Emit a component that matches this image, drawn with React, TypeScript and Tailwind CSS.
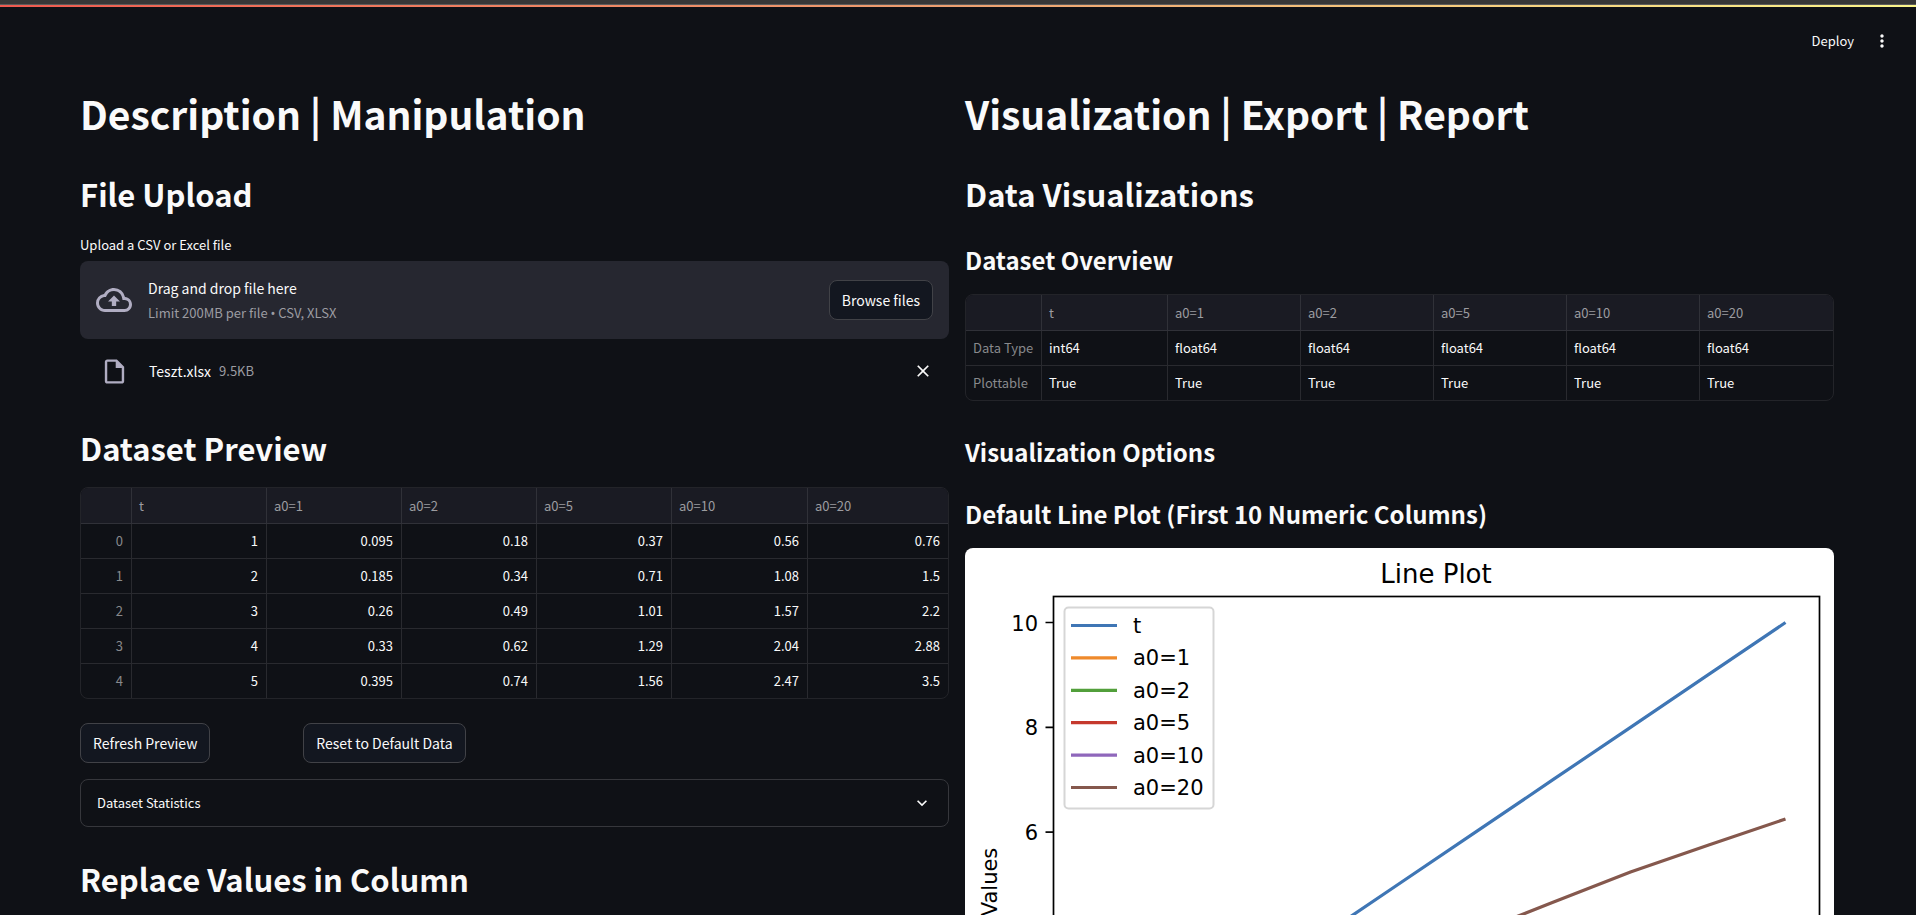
import type { ReactNode } from "react";

type Column = { label: string; width: string };

const previewColumns: Column[] = [
  { label: "", width: "w-[51px]" },
  { label: "t", width: "w-[135px]" },
  { label: "a0=1", width: "w-[135px]" },
  { label: "a0=2", width: "w-[135px]" },
  { label: "a0=5", width: "w-[135px]" },
  { label: "a0=10", width: "w-[136px]" },
  { label: "a0=20", width: "" },
];

const previewRows = [
  ["0", "1", "0.095", "0.18", "0.37", "0.56", "0.76"],
  ["1", "2", "0.185", "0.34", "0.71", "1.08", "1.5"],
  ["2", "3", "0.26", "0.49", "1.01", "1.57", "2.2"],
  ["3", "4", "0.33", "0.62", "1.29", "2.04", "2.88"],
  ["4", "5", "0.395", "0.74", "1.56", "2.47", "3.5"],
];

const overviewColumns: Column[] = [
  { label: "", width: "w-[76px]" },
  { label: "t", width: "w-[126px]" },
  { label: "a0=1", width: "w-[133px]" },
  { label: "a0=2", width: "w-[133px]" },
  { label: "a0=5", width: "w-[133px]" },
  { label: "a0=10", width: "w-[133px]" },
  { label: "a0=20", width: "" },
];

const overviewRows = [
  ["Data Type", "int64", "float64", "float64", "float64", "float64", "float64"],
  ["Plottable", "True", "True", "True", "True", "True", "True"],
];

const series = [
  { name: "t", color: "#3f76b5", values: [1, 2, 3, 4, 5, 6, 7, 8, 9, 10] },
  { name: "a0=1", color: "#ef8a2b", values: [0.095, 0.185, 0.26, 0.33, 0.395, 0.45, 0.5, 0.55, 0.59, 0.63] },
  { name: "a0=2", color: "#529f3b", values: [0.18, 0.34, 0.49, 0.62, 0.74, 0.85, 0.95, 1.04, 1.12, 1.2] },
  { name: "a0=5", color: "#c5392d", values: [0.37, 0.71, 1.01, 1.29, 1.56, 1.8, 2.02, 2.23, 2.42, 2.6] },
  { name: "a0=10", color: "#8f67bb", values: [0.56, 1.08, 1.57, 2.04, 2.47, 2.88, 3.26, 3.62, 3.96, 4.28] },
  { name: "a0=20", color: "#85584d", values: [0.76, 1.5, 2.2, 2.88, 3.5, 4.08, 4.66, 5.24, 5.75, 6.25] },
];

function Title({ children }: { children: ReactNode }) {
  return <h1 className="text-[39px] leading-[52px] font-bold">{children}</h1>;
}

function Heading({ children }: { children: ReactNode }) {
  return <h2 className="text-[31px] leading-[44px] font-semibold">{children}</h2>;
}

function Subheading({ children }: { children: ReactNode }) {
  return <h3 className="text-[24px] leading-9 font-semibold">{children}</h3>;
}

function ActionButton({ children }: { children: ReactNode }) {
  return (
    <button
      type="button"
      className="h-10 shrink-0 rounded-lg border border-[#414247] bg-[#131720] px-3 text-[14px] whitespace-nowrap"
    >
      {children}
    </button>
  );
}

function DataTable({ columns, rows, numeric }: { columns: Column[]; rows: string[][]; numeric?: boolean }) {
  return (
    <div className="overflow-hidden rounded-lg border border-[#232429]">
      <table className="w-full table-fixed border-separate border-spacing-0 text-[13px] leading-5">
        <thead>
          <tr className="h-9 bg-[#1a1b23]">
            {columns.map((column, i) => (
              <th
                key={i}
                scope="col"
                className={`${column.width} border-r border-b border-[#303138] p-0 pl-[7px] text-left font-normal text-[#9c9ca0] last:border-r-0`}
              >
                {column.label}
              </th>
            ))}
          </tr>
        </thead>
        <tbody>
          {rows.map((row) => (
            <tr key={row[0]} className="group h-[35px] last:h-[34px]">
              {row.map((cell, i) =>
                i === 0 ? (
                  <th
                    key={i}
                    scope="row"
                    className={`${numeric ? "text-right" : "text-left"} border-r border-b border-[#292a2f] p-0 pr-2 pl-[7px] font-normal whitespace-nowrap text-[#88898c] group-last:border-b-0`}
                  >
                    {cell}
                  </th>
                ) : (
                  <td
                    key={i}
                    className={`${numeric ? "text-right" : "text-left"} border-r border-b border-[#292a2f] p-0 pr-2 pl-[7px] group-last:border-b-0 last:border-r-0`}
                  >
                    {cell}
                  </td>
                ),
              )}
            </tr>
          ))}
        </tbody>
      </table>
    </div>
  );
}

const AXES = { left: 88, top: 48, right: 855, bottom: 619 };
const xAt = (index: number) => 123 + index * 77.5;
const yAt = (value: number) => 74.5 + (10 - value) * 52.4;

function LinePlot() {
  return (
    <svg
      viewBox="0 0 869 690"
      role="img"
      aria-label="Line Plot"
      className="block w-full rounded-lg bg-white font-['DejaVu_Sans',sans-serif]"
    >
      <text x="471" y="35" fontSize="26" textAnchor="middle">
        Line Plot
      </text>
      {series.map((line) => (
        <polyline
          key={line.name}
          points={line.values.map((v, i) => `${xAt(i)},${yAt(v)}`).join(" ")}
          fill="none"
          stroke={line.color}
          strokeWidth="3.2"
          strokeLinejoin="round"
        />
      ))}
      <rect
        x={AXES.left + 0.5}
        y={AXES.top + 0.5}
        width={AXES.right - AXES.left - 1}
        height={AXES.bottom - AXES.top}
        fill="none"
        stroke="#000"
        strokeWidth="1.7"
      />
      {[0, 2, 4, 6, 8, 10].map((tick) => (
        <g key={tick}>
          <path d={`M${AXES.left - 7.5} ${yAt(tick)}H${AXES.left}`} stroke="#000" strokeWidth="1.7" />
          <text x="73" y={yAt(tick) + 8} fontSize="21" textAnchor="end">
            {tick}
          </text>
        </g>
      ))}
      {[0, 2, 4, 6, 8].map((tick) => (
        <g key={tick}>
          <path d={`M${xAt(tick)} ${AXES.bottom}v7.5`} stroke="#000" strokeWidth="1.7" />
          <text x={xAt(tick)} y="649" fontSize="21" textAnchor="middle">
            {tick}
          </text>
        </g>
      ))}
      <text transform="translate(32 334) rotate(-90)" fontSize="21" textAnchor="middle">
        Values
      </text>
      <text x="471" y="677" fontSize="21" textAnchor="middle">
        Index
      </text>
      <rect x="99.5" y="59.5" width="149" height="201" rx="4" fill="#fff" stroke="#d6d6d6" strokeWidth="2" />
      {series.map((line, i) => (
        <g key={line.name}>
          <path d={`M106 ${77.5 + i * 32.4}h46`} stroke={line.color} strokeWidth="3.2" />
          <text x="168" y={85 + i * 32.4} fontSize="21">
            {line.name}
          </text>
        </g>
      ))}
    </svg>
  );
}

export default function App() {
  return (
    <div className="h-screen overflow-y-auto bg-[#0f1116] font-['Noto_Sans_CJK_SC','Noto_Sans',sans-serif] text-[#fafafa] [scrollbar-width:none]">
      <div className="h-[5px] border-b border-[#5c5c5c] bg-[#373737]" />
      <div className="h-[2px] bg-linear-to-r from-[#ef5a50] via-[#eda071] to-[#fbf68b]" />
      <header className="flex h-[68px] items-center justify-end gap-2 pr-[22px]">
        <button type="button" className="px-2 text-[13px] leading-5">
          Deploy
        </button>
        <button type="button" aria-label="Main menu" className="flex size-6 items-center justify-center">
          <svg viewBox="0 0 24 24" className="size-5" fill="currentColor" aria-hidden="true">
            <path d="M12 8c1.100 0 2-.9 2-2s-.9-2-2-2-2 .9-2 2 .9 2 2 2zm0 2c-1.100 0-2 .9-2 2s.9 2 2 2 2-.9 2-2-.9-2-2-2zm0 6c-1.100 0-2 .9-2 2s.9 2 2 2 2-.9 2-2-.9-2-2-2z" />
          </svg>
        </button>
      </header>

      <main className="grid grid-cols-2 gap-4 pt-3 pr-[82px] pl-20">
        <section className="flex min-w-0 flex-col">
          <Title>Description | Manipulation</Title>
          <div className="mt-[33px]">
            <Heading>File Upload</Heading>
          </div>
          <label htmlFor="dataset-file" className="mt-[19px] text-[13px] leading-5">
            Upload a CSV or Excel file
          </label>
          <input id="dataset-file" type="file" accept=".csv,.xlsx" className="hidden" />
          <div className="mt-[6px] flex h-[78px] items-center rounded-lg bg-[#262730] px-4">
            <svg viewBox="0 0 24 24" className="size-9 shrink-0" fill="#b0adc2" aria-hidden="true">
              <path d="M19.350 10.040A7.490 7.490 0 0 0 12 4C9.110 4 6.600 5.640 5.350 8.040A5.994 5.994 0 0 0 0 14c0 3.310 2.690 6 6 6h13c2.760 0 5-2.240 5-5 0-2.640-2.050-4.780-4.650-4.960zM19 18H6c-2.210 0-4-1.790-4-4 0-2.050 1.530-3.760 3.560-3.970l1.070-.110.500-.950A5.469 5.469 0 0 1 12 6c2.620 0 4.880 1.860 5.390 4.430l.300 1.500 1.530.110A2.980 2.980 0 0 1 22 15c0 1.650-1.350 3-3 3zM8 13h2.550v3h2.900v-3H16l-4-4-4 4z" />
            </svg>
            <div className="ml-4 flex grow flex-col gap-px">
              <span className="text-[14px] leading-6">Drag and drop file here</span>
              <span className="font-['Noto_Sans_CJK_SC','Noto_Sans',sans-serif] text-[13px] leading-6 text-[#9c9ca2]">
                Limit 200MB per file <span className="font-['Noto_Sans',sans-serif]">•</span> CSV, XLSX
              </span>
            </div>
            <ActionButton>Browse files</ActionButton>
          </div>
          <div className="mt-[14px] flex h-9 items-center pr-4 pl-5">
            <svg viewBox="0 0 24 24" className="size-[29px] shrink-0" fill="#b0adc2" aria-hidden="true">
              <path d="M14 2H6c-1.100 0-1.990.9-1.990 2L4 20c0 1.100.890 2 1.990 2H18c1.100 0 2-.9 2-2V8l-6-6zM6 20V4h7v5h5v11H6z" />
            </svg>
            <span className="ml-5 text-[14px] leading-6">Teszt.xlsx</span>
            <span className="ml-2 grow text-[13px] leading-6 text-[#9c9ca2]">9.5KB</span>
            <button type="button" aria-label="Remove Teszt.xlsx" className="flex size-5 items-center justify-center">
              <svg viewBox="0 0 24 24" className="size-5" fill="currentColor" aria-hidden="true">
                <path d="M19 6.410L17.590 5 12 10.590 6.410 5 5 6.410 10.590 12 5 17.590 6.410 19 12 13.410 17.590 19 19 17.590 13.410 12z" />
              </svg>
            </button>
          </div>
          <div className="mt-[37px] mb-[17px]">
            <Heading>Dataset Preview</Heading>
          </div>
          <DataTable columns={previewColumns} rows={previewRows} numeric />
          <div className="mt-6 grid grid-cols-4 gap-6">
            <div className="flex">
              <ActionButton>Refresh Preview</ActionButton>
            </div>
            <div className="flex">
              <ActionButton>Reset to Default Data</ActionButton>
            </div>
          </div>
          <button
            type="button"
            aria-expanded="false"
            className="mt-4 flex h-12 items-center justify-between rounded-lg border border-[#36373c] px-4 text-[13px]"
          >
            Dataset Statistics
            <svg viewBox="0 0 24 24" className="size-5" fill="currentColor" aria-hidden="true">
              <path d="M7.410 8.590L12 13.170l4.590-4.580L18 10l-6 6-6-6 1.410-1.410z" />
            </svg>
          </button>
          <div className="mt-[30px] pb-16">
            <Heading>Replace Values in Column</Heading>
          </div>
        </section>

        <section className="flex min-w-0 flex-col">
          <Title>Visualization | Export | Report</Title>
          <div className="mt-[33px]">
            <Heading>Data Visualizations</Heading>
          </div>
          <div className="mt-[26px] mb-4">
            <Subheading>Dataset Overview</Subheading>
          </div>
          <DataTable columns={overviewColumns} rows={overviewRows} />
          <div className="mt-[33px]">
            <Subheading>Visualization Options</Subheading>
          </div>
          <div className="mt-[26px] mb-4">
            <Subheading>Default Line Plot (First 10 Numeric Columns)</Subheading>
          </div>
          <LinePlot />
        </section>
      </main>
    </div>
  );
}
